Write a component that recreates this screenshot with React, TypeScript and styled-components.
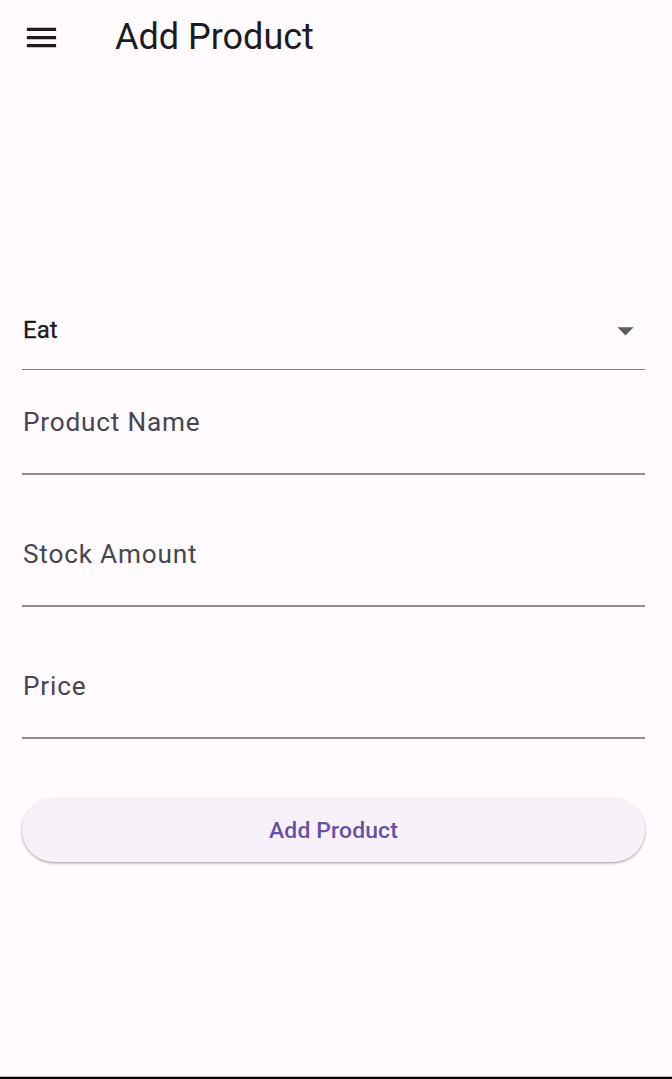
import React from "react";
import styled, { createGlobalStyle } from "styled-components";

const GlobalStyle = createGlobalStyle`
  html, body {
    margin: 0;
    padding: 0;
    background: #fffbfe;
    font-family: Roboto, "Noto Sans", "Liberation Sans", sans-serif;
  }
  * { box-sizing: border-box; }
`;

const Page = styled.div`
  height: 1079px;
  display: flex;
  flex-direction: column;
  background: #fffbfe;
`;

const Main = styled.div`
  flex: 1;
  display: flex;
  flex-direction: column;
`;

const AppBar = styled.header`
  height: 74px;
  display: flex;
  align-items: center;
  padding-left: 22px;
`;

const IconSlot = styled.div`
  width: 39px;
  height: 39px;
  display: flex;
  align-items: center;
  justify-content: center;
  color: #1d1b20;
`;

const Title = styled.h1`
  margin: 0 0 0 54px;
  font-size: 36px;
  font-weight: 400;
  color: #1d1b20;
  letter-spacing: 0;
  line-height: 1;
`;

const Form = styled.div`
  padding: 217px 27px 0 22px;
  display: flex;
  flex-direction: column;
`;

const Dropdown = styled.div`
  height: 79px;
  display: flex;
  align-items: center;
  justify-content: space-between;
  border-bottom: 1px solid #85828a;
`;

const DropdownValue = styled.span`
  font-size: 24px;
  font-weight: 400;
  color: #1d1b20;
  padding-left: 1px;
  -webkit-text-stroke: 0.3px #1d1b20;
`;

const FieldList = styled.div`
  display: flex;
  flex-direction: column;
  gap: 27px;
`;

const Field = styled.div`
  height: 105px;
  display: flex;
  align-items: center;
  border-bottom: 2px solid #8e8b92;
`;

const Label = styled.span`
  font-size: 26.2px;
  letter-spacing: 0.8px;
  color: #49454f;
  padding-left: 1px;
`;

const Button = styled.button`
  margin-top: 59px;
  height: 64px;
  border: none;
  border-radius: 32px;
  background: #f7f2fa;
  box-shadow: 0 1.5px 3px rgba(0, 0, 0, 0.25), 0 1px 2px rgba(0, 0, 0, 0.1);
  color: #6750a4;
  font-family: Roboto, "Noto Sans", sans-serif;
  font-size: 22.9px;
  font-weight: 500;
  letter-spacing: 0.16px;
  cursor: pointer;
`;

const BottomBar = styled.div`
  height: 3px;
  border-top: 1px solid #bdbdbd;
  background: #000;
`;

const MenuIcon = () => (
  <svg width="39" height="39" viewBox="0 0 24 24" fill="currentColor">
    <path d="M3 18h18v-2H3v2zm0-5h18v-2H3v2zm0-7v2h18V6H3z" />
  </svg>
);

const ArrowDropDown = () => (
  <svg width="39" height="39" viewBox="0 0 24 24" fill="#5f5c63">
    <path d="M7 10l5 5 5-5z" />
  </svg>
);

const fields = ["Product Name", "Stock Amount", "Price"];

export default function App() {
  return (
    <Page>
      <GlobalStyle />
      <Main>
        <AppBar>
          <IconSlot>
            <MenuIcon />
          </IconSlot>
          <Title>Add Product</Title>
        </AppBar>
        <Form>
          <Dropdown>
            <DropdownValue>Eat</DropdownValue>
            <IconSlot>
              <ArrowDropDown />
            </IconSlot>
          </Dropdown>
          <FieldList>
            {fields.map((f) => (
              <Field key={f}>
                <Label>{f}</Label>
              </Field>
            ))}
          </FieldList>
          <Button>Add Product</Button>
        </Form>
      </Main>
      <BottomBar />
    </Page>
  );
}
